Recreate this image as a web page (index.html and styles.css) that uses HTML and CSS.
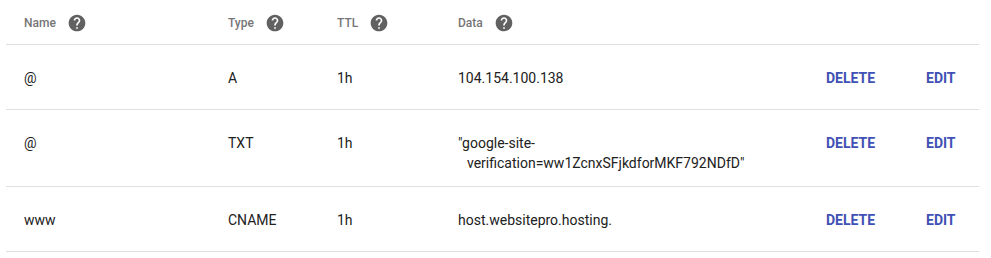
FILE: index.html
```html
<!DOCTYPE html>
<html lang="en">
<head>
    <meta charset="UTF-8">
    <meta name="viewport" content="width=device-width, initial-scale=1.0">
    <title>DNS records</title>
    <link rel="stylesheet" href="styles.css">
</head>
<body>
    <div class="records">
        <div class="record-row record-head">
            <div class="head-cell">Name <svg class="help-icon" viewBox="0 0 24 24"><path d="M12 2C6.48 2 2 6.48 2 12s4.48 10 10 10 10-4.48 10-10S17.52 2 12 2zm1 17h-2v-2h2v2zm2.07-7.75l-.9.92C13.45 12.9 13 13.5 13 15h-2v-.5c0-1.1.45-2.1 1.17-2.83l1.24-1.26c.37-.36.59-.86.59-1.41 0-1.1-.9-2-2-2s-2 .9-2 2H8c0-2.21 1.79-4 4-4s4 1.79 4 4c0 .88-.36 1.68-.93 2.25z"/></svg></div>
            <div class="head-cell">Type <svg class="help-icon" viewBox="0 0 24 24"><path d="M12 2C6.48 2 2 6.48 2 12s4.48 10 10 10 10-4.48 10-10S17.52 2 12 2zm1 17h-2v-2h2v2zm2.07-7.75l-.9.92C13.45 12.9 13 13.5 13 15h-2v-.5c0-1.1.45-2.1 1.17-2.83l1.24-1.26c.37-.36.59-.86.59-1.41 0-1.1-.9-2-2-2s-2 .9-2 2H8c0-2.21 1.79-4 4-4s4 1.79 4 4c0 .88-.36 1.68-.93 2.25z"/></svg></div>
            <div class="head-cell">TTL <svg class="help-icon" viewBox="0 0 24 24"><path d="M12 2C6.48 2 2 6.48 2 12s4.48 10 10 10 10-4.48 10-10S17.52 2 12 2zm1 17h-2v-2h2v2zm2.07-7.75l-.9.92C13.45 12.9 13 13.5 13 15h-2v-.5c0-1.1.45-2.1 1.17-2.83l1.24-1.26c.37-.36.59-.86.59-1.41 0-1.1-.9-2-2-2s-2 .9-2 2H8c0-2.21 1.79-4 4-4s4 1.79 4 4c0 .88-.36 1.68-.93 2.25z"/></svg></div>
            <div class="head-cell">Data <svg class="help-icon" viewBox="0 0 24 24"><path d="M12 2C6.48 2 2 6.48 2 12s4.48 10 10 10 10-4.48 10-10S17.52 2 12 2zm1 17h-2v-2h2v2zm2.07-7.75l-.9.92C13.45 12.9 13 13.5 13 15h-2v-.5c0-1.1.45-2.1 1.17-2.83l1.24-1.26c.37-.36.59-.86.59-1.41 0-1.1-.9-2-2-2s-2 .9-2 2H8c0-2.21 1.79-4 4-4s4 1.79 4 4c0 .88-.36 1.68-.93 2.25z"/></svg></div>
            <div></div>
            <div></div>
        </div>

        <div class="record-row">
            <div>@</div>
            <div>A</div>
            <div>1h</div>
            <div class="data-cell">104.154.100.138</div>
            <a class="action-btn" href="#">DELETE</a>
            <a class="action-btn" href="#">EDIT</a>
        </div>

        <div class="record-row">
            <div>@</div>
            <div>TXT</div>
            <div>1h</div>
            <div class="data-cell">"google-site-verification=ww1ZcnxSFjkdforMKF792NDfD"</div>
            <a class="action-btn" href="#">DELETE</a>
            <a class="action-btn" href="#">EDIT</a>
        </div>

        <div class="record-row">
            <div>www</div>
            <div>CNAME</div>
            <div>1h</div>
            <div class="data-cell">host.websitepro.hosting.</div>
            <a class="action-btn" href="#">DELETE</a>
            <a class="action-btn" href="#">EDIT</a>
        </div>
    </div>
</body>
</html>
```

FILE: styles.css
```css
* {
    margin: 0;
    padding: 0;
    box-sizing: border-box;
}

body {
    font-family: Roboto, 'Liberation Sans', sans-serif;
    background: #fff;
    color: #212121;
}

.records {
    margin: 0 12px 0 6px;
}

.record-row {
    display: grid;
    grid-template-columns: 204px 109px 121px 368px 100px auto;
    align-items: start;
    min-height: 65px;
    padding: 23px 0 13px 18px;
    border-bottom: 1px solid #e0e0e0;
    font-size: 14px;
    line-height: 20px;
}

.record-head {
    align-items: center;
    min-height: 0;
    height: 45px;
    padding: 1px 0 0 18px;
}

.head-cell {
    display: flex;
    align-items: center;
    gap: 11px;
    font-size: 12px;
    font-weight: 500;
    color: #757575;
}

.help-icon {
    width: 20px;
    height: 20px;
    fill: #616161;
}

.data-cell {
    max-width: 330px;
    padding-left: 9px;
    text-indent: -9px;
}

.action-btn {
    justify-self: start;
    font-size: 14px;
    font-weight: 700;
    color: #3f51b5;
    text-decoration: none;
}
```
